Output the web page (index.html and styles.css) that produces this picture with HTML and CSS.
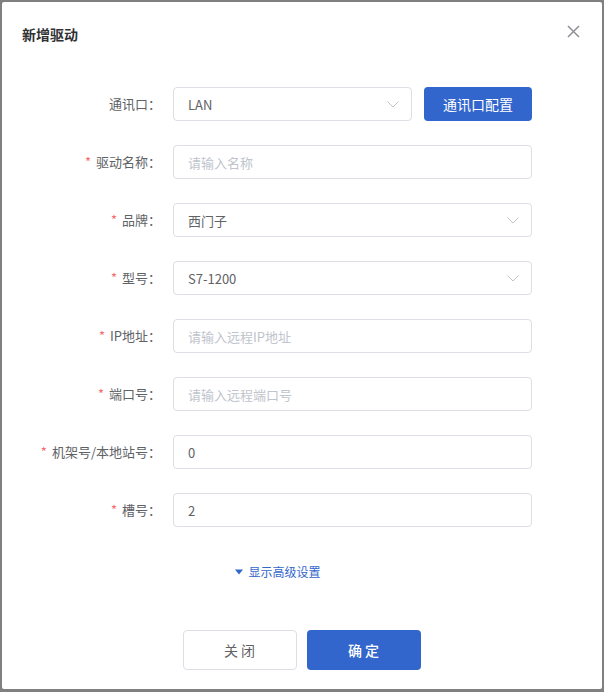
FILE: index.html
```html
<!DOCTYPE html>
<html lang="zh-CN">
<head>
<meta charset="utf-8">
<title>新增驱动</title>
<link rel="stylesheet" href="styles.css">
</head>
<body>
<div class="dialog">
  <div class="dialog-header">
    <span class="dialog-title">新增驱动</span>
    <svg class="close" width="13" height="13" viewBox="0 0 13 13"><path d="M1 1 L12 12 M12 1 L1 12" stroke="#909399" stroke-width="1.6" fill="none"/></svg>
  </div>
  <div class="dialog-body">
    <div class="form">
      <div class="form-item">
        <label class="label">通讯口：</label>
        <div class="control with-btn">
          <div class="select">
            <span class="value">LAN</span>
            <svg class="arrow" width="12" height="7" viewBox="0 0 12 7"><path d="M0.5 0.5 L6 6 L11.5 0.5" stroke="#c0c4cc" stroke-width="1" fill="none"/></svg>
          </div>
          <button class="btn-primary small">通讯口配置</button>
        </div>
      </div>
      <div class="form-item">
        <label class="label"><span class="req">*</span>驱动名称：</label>
        <div class="control"><div class="input"><span class="placeholder">请输入名称</span></div></div>
      </div>
      <div class="form-item">
        <label class="label"><span class="req">*</span>品牌：</label>
        <div class="control">
          <div class="select full">
            <span class="value">西门子</span>
            <svg class="arrow" width="12" height="7" viewBox="0 0 12 7"><path d="M0.5 0.5 L6 6 L11.5 0.5" stroke="#c0c4cc" stroke-width="1" fill="none"/></svg>
          </div>
        </div>
      </div>
      <div class="form-item">
        <label class="label"><span class="req">*</span>型号：</label>
        <div class="control">
          <div class="select full">
            <span class="value">S7-1200</span>
            <svg class="arrow" width="12" height="7" viewBox="0 0 12 7"><path d="M0.5 0.5 L6 6 L11.5 0.5" stroke="#c0c4cc" stroke-width="1" fill="none"/></svg>
          </div>
        </div>
      </div>
      <div class="form-item">
        <label class="label"><span class="req">*</span>IP地址：</label>
        <div class="control"><div class="input"><span class="placeholder">请输入远程IP地址</span></div></div>
      </div>
      <div class="form-item">
        <label class="label"><span class="req">*</span>端口号：</label>
        <div class="control"><div class="input"><span class="placeholder">请输入远程端口号</span></div></div>
      </div>
      <div class="form-item">
        <label class="label"><span class="req">*</span>机架号/本地站号：</label>
        <div class="control"><div class="input"><span class="value">0</span></div></div>
      </div>
      <div class="form-item">
        <label class="label"><span class="req">*</span>槽号：</label>
        <div class="control"><div class="input"><span class="value">2</span></div></div>
      </div>
    </div>
    <div class="advanced">
      <svg class="tri" width="8" height="6" viewBox="0 0 8 6"><path d="M0 0.5 L8 0.5 L4 5.5 Z" fill="#3366cc"/></svg>
      <span>显示高级设置</span>
    </div>
  </div>
  <div class="dialog-footer">
    <button class="btn-default">关 闭</button>
    <button class="btn-primary big">确 定</button>
  </div>
</div>
</body>
</html>
```
FILE: styles.css
```css
* { box-sizing: border-box; }
html, body { margin: 0; padding: 0; }
body {
  background: #808080;
  width: 604px;
  height: 692px;
  font-family: "Microsoft YaHei", "Noto Sans CJK SC", "Noto Sans", sans-serif;
  overflow: hidden;
}
.dialog {
  margin: 2px 2px 0 2px;
  width: 600px;
  height: 687px;
  background: #fff;
  border-radius: 2px;
  display: flex;
  flex-direction: column;
}
.dialog-header {
  display: flex;
  justify-content: space-between;
  align-items: flex-start;
  padding: 20px 22px 10px 20px;
}
.dialog-title {
  font-size: 14px;
  line-height: 24px;
  font-weight: 700;
  color: #303133;
}
.close { margin-top: 3px; }
.dialog-body {
  padding-top: 31px;
}
.form {
  display: flex;
  flex-direction: column;
  gap: 24px;
}
.form-item {
  display: flex;
  align-items: center;
  height: 34px;
}
.label {
  width: 171px;
  padding-right: 12px;
  text-align: right;
  font-size: 13px;
  line-height: 34px;
  color: #606266;
  white-space: nowrap;
}
.req {
  color: #f56c6c;
  margin-right: 5px;
}
.control {
  width: 359px;
  display: flex;
  gap: 12px;
}
.input, .select {
  height: 34px;
  border: 1px solid #dcdfe6;
  border-radius: 4px;
  padding: 0 14px;
  display: flex;
  align-items: center;
  font-size: 13px;
  color: #606266;
  width: 100%;
}
.select { justify-content: space-between; width: 239px; padding-right: 12px; }
.select.full { width: 100%; }
.placeholder { color: #c0c4cc; }
.arrow { margin-top: 1px; }
.btn-primary {
  background: #3366cc;
  color: #fff;
  border: none;
  border-radius: 4px;
  font-family: inherit;
  font-size: 14px;
  padding: 0;
}
.btn-primary.small { width: 108px; height: 34px; }
.advanced {
  margin-top: 34px;
  height: 20px;
  display: flex;
  align-items: center;
  justify-content: center;
  gap: 5px;
  font-size: 12px;
  color: #3366cc;
  padding-right: 48px;
}
.tri { margin-top: 1px; }
.dialog-footer {
  margin-top: 49px;
  display: flex;
  justify-content: center;
  gap: 10px;
  padding-right: 1px;
}
.btn-default {
  width: 114px;
  height: 40px;
  background: #fff;
  border: 1px solid #dcdfe6;
  border-radius: 4px;
  font-family: inherit;
  font-size: 14px;
  color: #606266;
  padding: 0;
}
.btn-primary.big { width: 114px; height: 40px; font-weight: 500; }
```
